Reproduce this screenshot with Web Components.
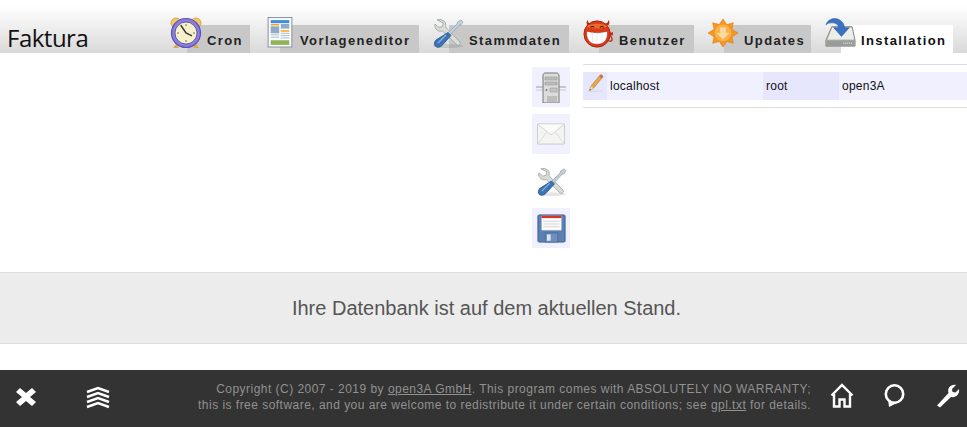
<!DOCTYPE html>
<html lang="de">
<head>
<meta charset="utf-8">
<title>Faktura</title>
<style>
  html, body { margin: 0; padding: 0; background: #fff; }
  body { font-family: "Liberation Sans", Arial, sans-serif; }
</style>
</head>
<body>
<app-page>
  <app-header slot="header" title="Faktura">
    <nav-tab icon="clock" w="63" off="-17" top="-8" size="32">Cron</nav-tab>
    <nav-tab icon="template" w="139" off="-13" top="-8" size="26">Vorlageneditor</nav-tab>
    <nav-tab icon="tools" w="120" off="-17" top="-8" size="32">Stammdaten</nav-tab>
    <nav-tab icon="devil" w="95" off="-16" top="-6" size="30">Benutzer</nav-tab>
    <nav-tab icon="update" w="87" off="-16" top="-7" size="30">Updates</nav-tab>
    <nav-tab icon="install" w="112" off="-16" top="-7" size="31" active>Installation</nav-tab>
  </app-header>
  <db-panel slot="main">
    <tool-button slot="tools" icon="server" size="32" shaded></tool-button>
    <tool-button slot="tools" icon="mail" size="28" shaded></tool-button>
    <tool-button slot="tools" icon="tools" size="31"></tool-button>
    <tool-button slot="tools" icon="save" size="29" shaded></tool-button>
    <db-row host="localhost" user="root" db="open3A"></db-row>
  </db-panel>
  <status-banner slot="main">Ihre Datenbank ist auf dem aktuellen Stand.</status-banner>
  <app-footer slot="footer"></app-footer>
</app-page>

<script>
  // all the pictures in one place, drawn on a 32x32 box
  const ICONS = {
    clock: `
      <circle cx="6" cy="6" r="5" fill="#f3c766" stroke="#d79a35" stroke-width=".8"/>
      <circle cx="26" cy="6" r="5" fill="#f3c766" stroke="#d79a35" stroke-width=".8"/>
      <path d="M6 27l-3 4h6zM26 27l3 4h-6z" fill="#e2a83f"/>
      <circle cx="16" cy="16" r="14.500" fill="#8a7fdc" stroke="#5d50b8" stroke-width="1.200"/>
      <circle cx="16" cy="16" r="11" fill="#f6f1c9" stroke="#4a3fa0" stroke-width=".8"/>
      <path d="M11 8.500L16 16l5.500 2.600" fill="none" stroke="#3a3a3a" stroke-width="1.500" stroke-linecap="round"/>
      <path d="M16 7v2M16 23v2M7 16h2M23 16h2" stroke="#77735a" stroke-width="1"/>`,
    template: `
      <rect x=".7" y=".7" width="30.600" height="38" fill="#fdfdfd" stroke="#8a98aa" stroke-width="1.400"/>
      <rect x="4" y="4" width="24" height="4" fill="#3d8fd6"/>
      <rect x="4" y="9" width="11" height="2" fill="#f5a623"/>
      <rect x="4" y="12" width="11" height="9" fill="#8fa9c6"/>
      <rect x="17" y="9" width="11" height="6" fill="#8fa9c6"/>
      <rect x="17" y="17" width="11" height="2" fill="#f5a623"/>
      <path d="M4 23h11M4 26h11M17 21h11M17 24h11M17 27h11" stroke="#8fa9c6" stroke-width="1"/>
      <rect x="4" y="30" width="24" height="6" fill="#8fb356"/>`,
    tools: `
      <ellipse cx="16" cy="29" rx="15" ry="2" fill="#000" opacity=".1"/>
      <path d="M5 3a7 7 0 0 1 7 1c2 2 2 4 1.500 6L28 25c1 2-1 4-3 3L10.500 14c-2.500 .7-5 0-6.500-2-1.200-1.600-1.400-3.500-1-5l4 3.500 3.500-1 .8-3.500z" fill="#dadcd8" stroke="#a3a6a4" stroke-width=".9"/>
      <path d="M29 3l2 2-2 3-2 .5L17 19l-2-2L25 7l.500-2z" fill="#c3cfdb" stroke="#8f9dad" stroke-width=".7"/>
      <path d="M16 15.500l3 3-9 10c-2 2-5 2.300-6.500 .8S2 25 4 23z" fill="#3b74b4" stroke="#28548a" stroke-width=".8"/>
      <path d="M6 26l8-8" stroke="#8db3dc" stroke-width="1.200"/>`,
    devil: `
      <path d="M5 7C3 4 4 2 5 1c0 3 2 4 5 4zM27 7c2-3 1-5 0-6 0 3-2 4-5 4z" fill="#b92a12"/>
      <path d="M27 23c4 2 5-1 3-4l-1-4 3 2-1-3" fill="none" stroke="#cf2c14" stroke-width="1.500"/>
      <circle cx="15" cy="16" r="14" fill="#d93a1b" stroke="#a81f0b"/>
      <path d="M4 8c3-4 19-4 22 0-5 3-17 3-22 0z" fill="#ea6a2c"/>
      <path d="M8 9q2-2 4 0M18 9q2-2 4 0" fill="none" stroke="#5a1405" stroke-width="1.200"/>
      <path d="M4 13c7 2 15 2 22 0 1 8-3 14-11 14S3 21 4 13z" fill="#fff" stroke="#a81f0b" stroke-width=".6"/>
      <path d="M10 14v12M15 15v12M20 14v12" stroke="#d9d9d9" stroke-width=".6"/>`,
    update: `
      <path d="M16 1l4 6 7-2-1.500 7L32 16l-6.500 4L27 27l-7-2-4 6-4-6-7 2 1.500-7L0 16l6.500-4L5 5l7 2z" fill="#f6961f" stroke="#dd7a10" stroke-width=".6"/>
      <circle cx="16" cy="16" r="9" fill="#fbb04a"/>
      <path d="M13 10h6v6h4l-7 7-7-7h4z" fill="#fcd9a0"/>`,
    install: `
      <path d="M7 9h21l3 14v6H1v-6z" fill="#c9cbc8" stroke="#7e817e"/>
      <path d="M7.500 10h20l2.500 12H3z" fill="#eceeea"/>
      <rect x="1.500" y="23" width="29" height="6" rx="1" fill="#9a9c99"/>
      <path d="M19 26h9" stroke="#d8d8d8" stroke-width="1.500" stroke-dasharray="1 1"/>
      <path d="M1 7C3 1 10-1 15 2c3 2 5 4 5 8h5l-8 9-8-9h5c0-3-3-5-6-5S3 5 1 7z" fill="#3a72c4" stroke="#285b9e" stroke-width=".6"/>`,
    server: `
      <path d="M1 16h30" stroke="#aaa" stroke-width="1.200"/>
      <path d="M1 19h30" stroke="#ccc" stroke-width="1"/>
      <path d="M8 5c0-2 1-3 2-3h12c1 0 2 1 2 3v27H8z" fill="#dcdcdc" stroke="#777"/>
      <path d="M10 6h12v3H10zM10 11h12v3H10z" fill="#bdbdbd" stroke="#8d8d8d" stroke-width=".5"/>
      <path d="M15 17h7v4h-7z" fill="#c4c4c4" stroke="#8d8d8d" stroke-width=".5"/>
      <circle cx="11.500" cy="19" r="1" fill="#777"/>
      <path d="M13 25v6M15 25v6M17 25v6M19 25v6M21 25v6" stroke="#8f8f8f" stroke-width=".8"/>`,
    mail: `
      <rect x=".5" y="4.500" width="31" height="23" rx="1" fill="#f4f4f2" stroke="#c6c6c4"/>
      <path d="M1 5l15 12L31 5" fill="#fbfbfa" stroke="#cfcfcd"/>
      <path d="M1 27l10-13M31 27L21 14" fill="none" stroke="#d8d8d6"/>`,
    save: `
      <path d="M2 1h28l1 1v28l-1 1H2l-1-1V2z" fill="#5b80b2" stroke="#3d5d8c"/>
      <rect x="5" y="2" width="22" height="16" fill="#fafafa"/>
      <rect x="5" y="2" width="22" height="2.500" fill="#d8352a"/>
      <path d="M7 8h18M7 11h18M7 14h18" stroke="#d4d4d4"/>
      <rect x="9" y="21" width="14" height="10" fill="#6f8fbd" stroke="#3d5d8c" stroke-width=".6"/>
      <rect x="11" y="22.500" width="4" height="7" fill="#dfe6f0"/>`,
    pencil: `
      <path d="M2 22l2-6L16 1.500c1-1 2.500-.3 3 .2s1 2 0 3L7.500 19z" fill="#e5a945" stroke="#9a6a28" stroke-width=".7"/>
      <path d="M15 3l3.500 3 1-1.500c.6-1-.4-3-2-3.200z" fill="#e0604c"/>
      <path d="M2 22l2-6 3.500 3z" fill="#eed9b2"/>
      <path d="M2 22l.7-2 1.300 1z" fill="#333"/>
      <path d="M0 23h18" stroke="#bbb" stroke-width=".6"/>`
  };

  const picture = (name, w, h, box) =>
    `<svg xmlns="http://www.w3.org/2000/svg" width="${w}" height="${h}" viewBox="${box || "0 0 32 32"}">${ICONS[name]}</svg>`;

  class AppPage extends HTMLElement {
    constructor() {
      super();
      this.attachShadow({ mode: "open" });
      this.shadowRoot.innerHTML = `
        <style>
          :host { display: flex; flex-direction: column; height: 427px; overflow: hidden; }
          main { flex: 1; display: flex; flex-direction: column; }
        </style>
        <slot name="header"></slot>
        <main><slot name="main"></slot></main>
        <slot name="footer"></slot>`;
    }
  }

  class AppHeader extends HTMLElement {
    constructor() {
      super();
      this.attachShadow({ mode: "open" });
    }
    connectedCallback() {
      this.shadowRoot.innerHTML = `
        <style>
          :host { display: flex; height: 53px; background: linear-gradient(#fff 0, #fff 6px, #d9d9d9 53px); }
          h1 {
            flex: none; width: 187px; margin: 0; padding: 23px 0 0 7px; box-sizing: border-box;
            font: 400 24px/29px "Open Sans", sans-serif; color: #111; letter-spacing: -.5px;
          }
          .tabs { display: flex; gap: 30px; align-items: flex-end; }
        </style>
        <h1>${this.getAttribute("title")}</h1>
        <div class="tabs"><slot></slot></div>`;
    }
  }

  class NavTab extends HTMLElement {
    constructor() {
      super();
      this.attachShadow({ mode: "open" });
    }
    connectedCallback() {
      const size = +this.getAttribute("size");
      const icon = this.getAttribute("icon");
      const tall = icon === "template";
      this.shadowRoot.innerHTML = `
        <style>
          :host {
            display: block; position: relative; flex: none; height: 28px; box-sizing: border-box;
            width: ${this.getAttribute("w")}px;
            padding: 8px 0 0 20px; background: #c8c8c8; white-space: nowrap;
            font: 700 13px/15px "Liberation Sans", Arial, sans-serif; letter-spacing: 1.4px; color: #222;
          }
          :host([active]) { background: #fff; color: #111; }
          svg { position: absolute; left: ${this.getAttribute("off")}px; top: ${this.getAttribute("top")}px; }
        </style>
        ${picture(icon, size, tall ? 31 : size, tall ? "0 0 32 40" : "")}<slot></slot>`;
    }
  }

  class ToolButton extends HTMLElement {
    constructor() {
      super();
      this.attachShadow({ mode: "open" });
    }
    connectedCallback() {
      const size = this.getAttribute("size");
      this.shadowRoot.innerHTML = `
        <style>
          :host { display: flex; width: 38px; height: 40px; align-items: center; justify-content: center; }
          :host([shaded]) { background: #f0f0ff; }
        </style>
        ${picture(this.getAttribute("icon"), size, size)}`;
    }
  }

  class DbRow extends HTMLElement {
    constructor() {
      super();
      this.attachShadow({ mode: "open" });
    }
    connectedCallback() {
      this.shadowRoot.innerHTML = `
        <style>
          :host {
            display: grid; grid-template-columns: 24px 156px 76px 1fr; height: 28px; margin: 7px 0;
            font: 12px/28px "Liberation Sans", Arial, sans-serif; letter-spacing: .25px;
            color: #111; background: #f0f0ff;
          }
          div { padding-left: 3px; }
          .dark { background: #e6e6fc; }
          .edit { padding: 2px 0 0 5px; box-sizing: border-box; }
          svg { display: block; }
        </style>
        <div class="dark edit">${picture("pencil", 18, 18, "0 0 24 24")}</div>
        <div>${this.getAttribute("host")}</div>
        <div class="dark">${this.getAttribute("user")}</div>
        <div>${this.getAttribute("db")}</div>`;
    }
  }

  class DbPanel extends HTMLElement {
    constructor() {
      super();
      this.attachShadow({ mode: "open" });
      this.shadowRoot.innerHTML = `
        <style>
          :host { display: flex; height: 219px; padding: 0 0 0 532px; box-sizing: border-box; }
          .tools { display: flex; flex-direction: column; gap: 7px; width: 38px; padding-top: 14px; }
          .table {
            flex: 1; height: 42px; margin: 11px 0 0 13px;
            border-top: 1px solid #ddd; border-bottom: 1px solid #ddd;
          }
        </style>
        <div class="tools"><slot name="tools"></slot></div>
        <div class="table"><slot></slot></div>`;
    }
  }

  class StatusBanner extends HTMLElement {
    constructor() {
      super();
      this.attachShadow({ mode: "open" });
      this.shadowRoot.innerHTML = `
        <style>
          :host {
            display: block; height: 72px; box-sizing: border-box; padding-left: 6px;
            background: #ececec; border-top: 1px solid #ddd; border-bottom: 1px solid #ddd;
            font: 20px/70px "Liberation Sans", Arial, sans-serif; color: #555; text-align: center;
          }
        </style>
        <slot></slot>`;
    }
  }

  class AppFooter extends HTMLElement {
    constructor() {
      super();
      this.attachShadow({ mode: "open" });
      this.shadowRoot.innerHTML = `
        <style>
          :host {
            display: flex; align-items: flex-start; height: 57px; background: #333; color: #919191;
            font: 12px/16px "Liberation Sans", Arial, sans-serif;
          }
          svg { display: block; flex: none; }
          .left { display: flex; gap: 42px; padding: 11px 0 0 11px; }
          p { flex: 1; margin: 0; padding-top: 11px; text-align: right; letter-spacing: .47px; white-space: nowrap; }
          a { color: inherit; text-decoration: underline; }
          .right { display: flex; gap: 22px; padding: 11px 6px 0 16px; }
        </style>
        <div class="left">
          <svg width="30" height="30" viewBox="0 0 30 30"><path d="M9 7l6 5 6-5 4 4-6 5 6 5-4 4-6-5-6 5-4-4 6-5-6-5z" fill="#fff"/></svg>
          <svg width="30" height="30" viewBox="0 0 30 30" fill="none" stroke="#fff" stroke-width="2.400"><path d="M4 11l11-4 11 4M4 16l11-4 11 4M4 21l11-4 11 4M4 26l11-4 11 4"/></svg>
        </div>
        <p>Copyright (C) 2007 - 2019 by <a>open3A GmbH</a>. This program comes with ABSOLUTELY NO WARRANTY;<br>this is free software, and you are welcome to redistribute it under certain conditions; see <a>gpl.txt</a> for details.</p>
        <div class="right">
          <svg width="30" height="30" viewBox="0 0 30 30" fill="none" stroke="#fff" stroke-width="2.400"><path d="M4.500 14.500L15 4l10.500 10.500M7 13v12.500h5.500v-7h5v7H23V13"/></svg>
          <svg width="30" height="30" viewBox="0 0 30 30"><path d="M9 18l1 8 8-4z" fill="#fff"/><circle cx="15.500" cy="13" r="8.700" fill="#333" stroke="#fff" stroke-width="2.600"/></svg>
          <svg width="30" height="30" viewBox="0 0 30 30"><path d="M6 24.500L17.500 12c-1.500-4.500 2-9 7.500-8l-4 4 .5 3 3 .5 3.500-3.500c1 5-3 9-8 8L9 26.500z" fill="#fff"/></svg>
        </div>`;
    }
  }

  customElements.define("app-page", AppPage);
  customElements.define("app-header", AppHeader);
  customElements.define("nav-tab", NavTab);
  customElements.define("tool-button", ToolButton);
  customElements.define("db-row", DbRow);
  customElements.define("db-panel", DbPanel);
  customElements.define("status-banner", StatusBanner);
  customElements.define("app-footer", AppFooter);
</script>
</body>
</html>
